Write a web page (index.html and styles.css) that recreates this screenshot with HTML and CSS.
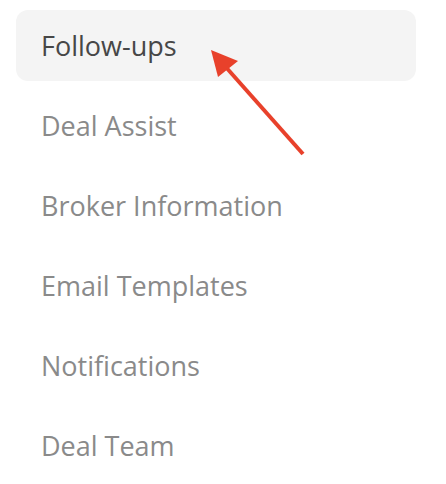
FILE: index.html
```html
<!DOCTYPE html>
<html>
<head>
<meta charset="utf-8">
<link rel="stylesheet" href="styles.css">
</head>
<body>
<nav class="menu">
  <div class="item active">Follow-ups</div>
  <div class="item">Deal Assist</div>
  <div class="item">Broker Information</div>
  <div class="item">Email Templates</div>
  <div class="item">Notifications</div>
  <div class="item">Deal Team</div>
</nav>
<svg class="arrow" width="446" height="484" viewBox="0 0 446 484">
  <line x1="303" y1="154" x2="224" y2="65" stroke="#e8412b" stroke-width="4" stroke-linecap="butt"/>
  <polygon points="211,50 238,61 218,77" fill="#e8412b"/>
</svg>
</body>
</html>
```
FILE: styles.css
```css
html, body {
  margin: 0;
  padding: 0;
  background: #ffffff;
}
body {
  width: 446px;
  height: 484px;
  position: relative;
  overflow: hidden;
  font-family: "Open Sans", "Liberation Sans", sans-serif;
}
.menu {
  display: flex;
  flex-direction: column;
  gap: 9px;
  padding: 10px 30px 0 16px;
}
.item {
  height: 71px;
  display: flex;
  align-items: center;
  padding-left: 25px;
  border-radius: 12px;
  font-size: 27px;
  font-weight: 500;
  color: #8a8a8a;
}
.item.active {
  background: #f4f4f4;
  color: #474747;
}
.arrow {
  position: absolute;
  left: 0;
  top: 0;
  pointer-events: none;
}
```
